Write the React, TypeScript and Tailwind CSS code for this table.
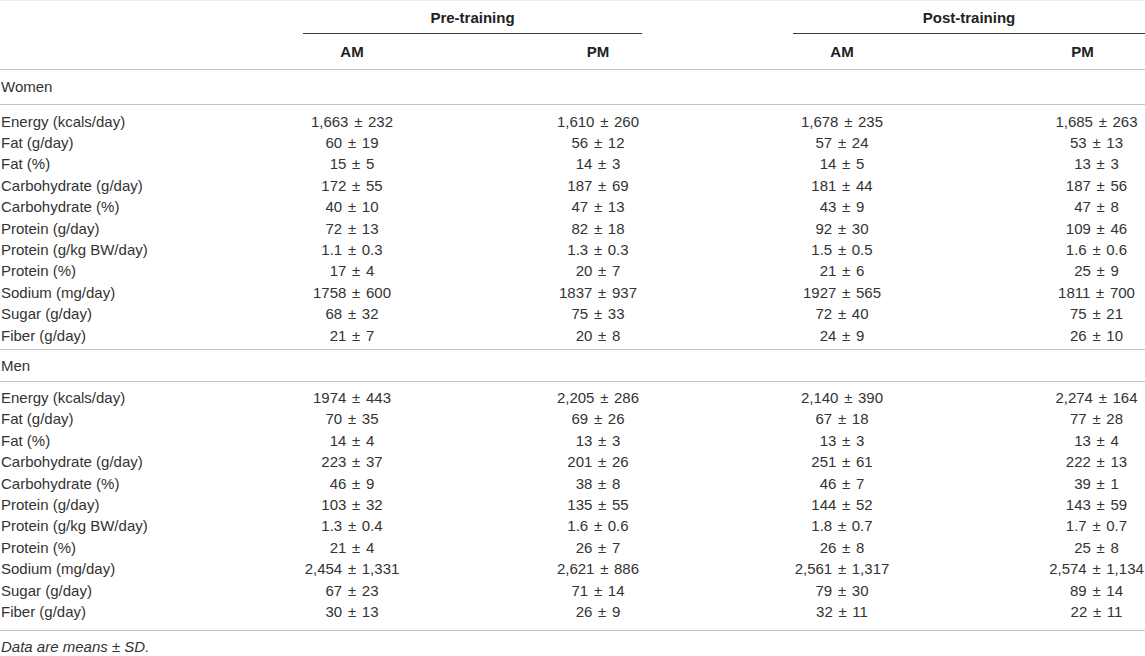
const women: [string, string, string, string, string][] = [
  ["Energy (kcals/day)", "1,663 ± 232", "1,610 ± 260", "1,678 ± 235", "1,685 ± 263"],
  ["Fat (g/day)", "60 ± 19", "56 ± 12", "57 ± 24", "53 ± 13"],
  ["Fat (%)", "15 ± 5", "14 ± 3", "14 ± 5", "13 ± 3"],
  ["Carbohydrate (g/day)", "172 ± 55", "187 ± 69", "181 ± 44", "187 ± 56"],
  ["Carbohydrate (%)", "40 ± 10", "47 ± 13", "43 ± 9", "47 ± 8"],
  ["Protein (g/day)", "72 ± 13", "82 ± 18", "92 ± 30", "109 ± 46"],
  ["Protein (g/kg BW/day)", "1.1 ± 0.3", "1.3 ± 0.3", "1.5 ± 0.5", "1.6 ± 0.6"],
  ["Protein (%)", "17 ± 4", "20 ± 7", "21 ± 6", "25 ± 9"],
  ["Sodium (mg/day)", "1758 ± 600", "1837 ± 937", "1927 ± 565", "1811 ± 700"],
  ["Sugar (g/day)", "68 ± 32", "75 ± 33", "72 ± 40", "75 ± 21"],
  ["Fiber (g/day)", "21 ± 7", "20 ± 8", "24 ± 9", "26 ± 10"],
];

const men: [string, string, string, string, string][] = [
  ["Energy (kcals/day)", "1974 ± 443", "2,205 ± 286", "2,140 ± 390", "2,274 ± 164"],
  ["Fat (g/day)", "70 ± 35", "69 ± 26", "67 ± 18", "77 ± 28"],
  ["Fat (%)", "14 ± 4", "13 ± 3", "13 ± 3", "13 ± 4"],
  ["Carbohydrate (g/day)", "223 ± 37", "201 ± 26", "251 ± 61", "222 ± 13"],
  ["Carbohydrate (%)", "46 ± 9", "38 ± 8", "46 ± 7", "39 ± 1"],
  ["Protein (g/day)", "103 ± 32", "135 ± 55", "144 ± 52", "143 ± 59"],
  ["Protein (g/kg BW/day)", "1.3 ± 0.4", "1.6 ± 0.6", "1.8 ± 0.7", "1.7 ± 0.7"],
  ["Protein (%)", "21 ± 4", "26 ± 7", "26 ± 8", "25 ± 8"],
  ["Sodium (mg/day)", "2,454 ± 1,331", "2,621 ± 886", "2,561 ± 1,317", "2,574 ± 1,134"],
  ["Sugar (g/day)", "67 ± 23", "71 ± 14", "79 ± 30", "89 ± 14"],
  ["Fiber (g/day)", "30 ± 13", "26 ± 9", "32 ± 11", "22 ± 11"],
];

const cols = "grid grid-cols-[230px_244px_248px_240px_1fr]";
const val = "text-center whitespace-nowrap [word-spacing:1.5px]";

function Rows({ rows, className }: { rows: typeof women; className: string }) {
  return (
    <div className={`border-b border-[#c4c4c4] ${className}`}>
      {rows.map((r) => (
        <div key={r[0]} className={`${cols} h-[21.4px] items-center`}>
          <div className="pl-[1px] whitespace-nowrap">{r[0]}</div>
          <div className={val}>{r[1]}</div>
          <div className={val}>{r[2]}</div>
          <div className={val}>{r[3]}</div>
          <div className={`pl-[86px] ${val}`}>{r[4]}</div>
        </div>
      ))}
    </div>
  );
}

export default function App() {
  return (
    <div
      className="w-[1145px] h-[656px] overflow-hidden bg-white text-[15px] leading-4 text-[#333]"
      style={{ fontFamily: '"Liberation Sans", Arial, sans-serif' }}
    >
      <div className="border-t border-[#ececec]">
        {/* group headers */}
        <div className={`${cols} h-[33px] font-bold text-[#222]`}>
          <div />
          <div className="col-span-2 ml-[73px] mr-[80px] flex items-end justify-center border-b border-[#3a3a3a] pb-[7px]">
            Pre-training
          </div>
          <div className="col-span-2 ml-[71px] flex items-end justify-center border-b border-[#3a3a3a] pb-[7px]">
            Post-training
          </div>
        </div>
        <div className={`${cols} h-[36px] items-center border-b border-[#c4c4c4] font-bold text-[#222]`}>
          <div />
          <div className="text-center">AM</div>
          <div className="text-center">PM</div>
          <div className="text-center">AM</div>
          <div className="pl-[58px] text-center">PM</div>
        </div>

        <div className="flex h-[35px] items-center border-b border-[#c4c4c4] pl-[1px]">Women</div>
        <Rows rows={women} className="pt-[6px] pb-[3px]" />

        <div className="flex h-[32px] items-center border-b border-[#c4c4c4] pl-[1px]">Men</div>
        <Rows rows={men} className="pt-[5px] pb-[7px]" />

        <div className="pt-[8px] pl-[1px] italic">Data are means ± SD.</div>
      </div>
    </div>
  );
}
